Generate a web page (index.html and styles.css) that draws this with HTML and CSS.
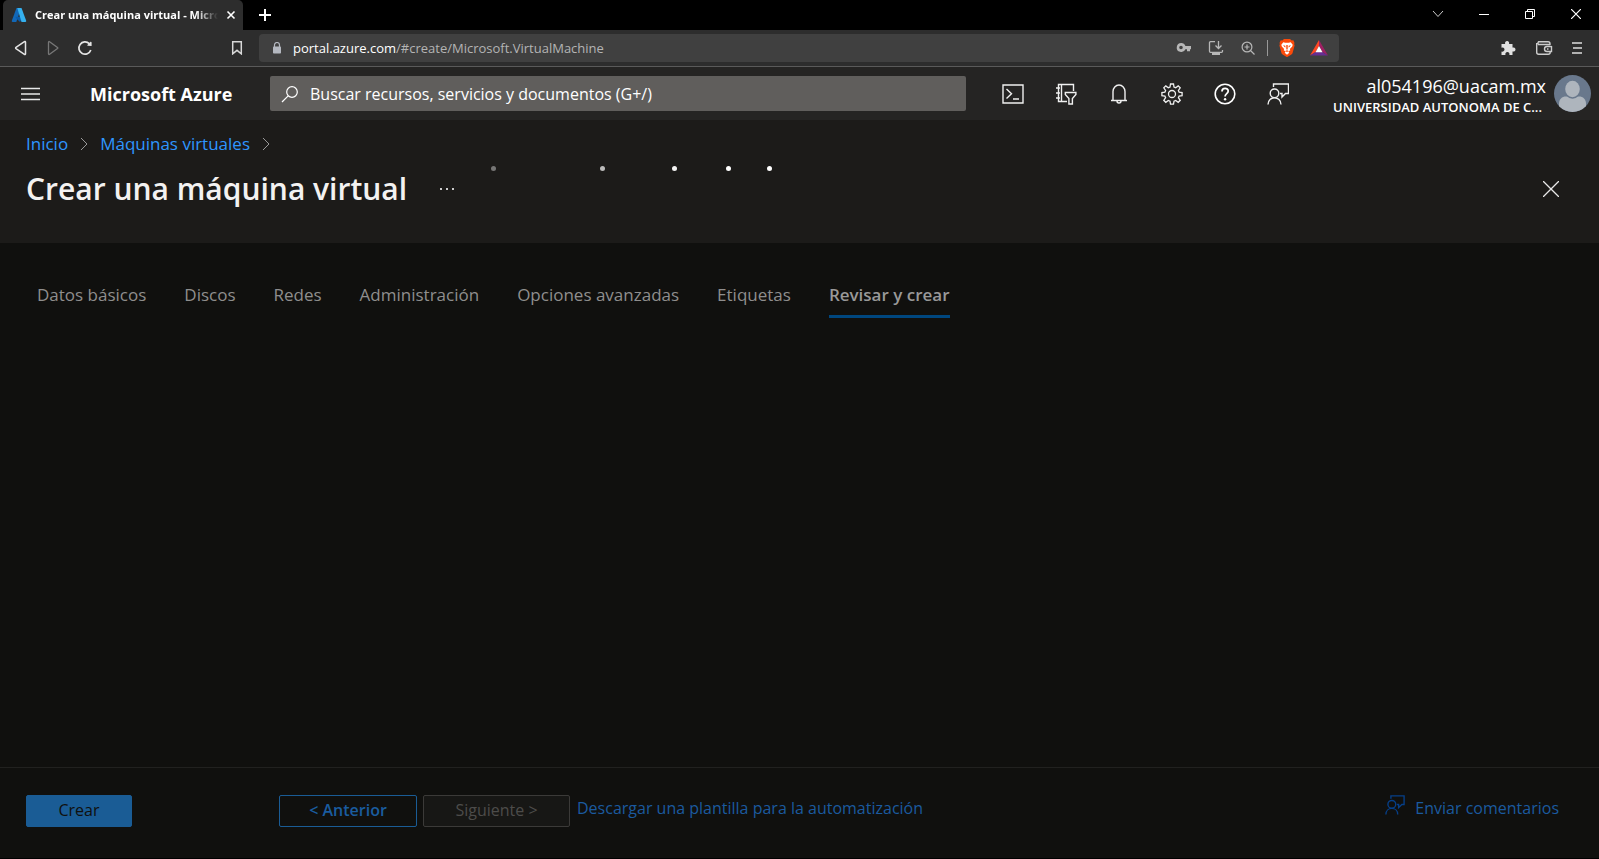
FILE: index.html
```html
<!DOCTYPE html>
<html lang="es">
<head>
<meta charset="utf-8">
<meta name="viewport" content="width=device-width, initial-scale=1">
<title>Crear una máquina virtual - Microsoft Azure</title>
<link rel="stylesheet" href="styles.css">
</head>
<body>
<div class="tabstrip">
  <div class="browser-tab">
    <svg class="favicon" width="16" height="16" viewBox="0 0 16 16"><path d="M5.5 1h4.6L5.300 15H1.600a.9.9 0 0 1-.8-1.200z" fill="#1268b8"/><path d="M4.500 9.800h7.300L9 15 4.800 11z" fill="#0a5cab"/><path d="M6.300 1h4.200l4.700 12.800a.9.900 0 0 1-.8 1.200H10.500z" fill="#35b0ee"/></svg>
    <span class="tab-title">Crear una máquina virtual - Micro</span>
    <button class="plain tab-close" aria-label="Cerrar pestaña"><svg width="10" height="10" viewBox="0 0 10 10"><path d="M1.500 1.500l7 7M8.500 1.500l-7 7" stroke="#fff" stroke-width="1.600"/></svg></button>
  </div>
  <button class="plain new-tab" aria-label="Nueva pestaña"><svg width="12" height="12" viewBox="0 0 12 12"><path d="M6 0v12M0 6h12" stroke="#fff" stroke-width="2"/></svg></button>
  <div class="window-controls">
    <button class="plain" aria-label="Buscar pestañas"><svg width="12" height="12" viewBox="0 0 12 12"><path d="M1 3l5 5.500L11 3" fill="none" stroke="#ccc"/></svg></button>
    <button class="plain" aria-label="Minimizar"><svg width="10" height="10" viewBox="0 0 10 10"><path d="M0 5.500h10" stroke="#fff"/></svg></button>
    <button class="plain" aria-label="Restaurar"><svg width="10" height="10" viewBox="0 0 10 10"><path d="M.5 2.500h7v7h-7zM2.500 2.500v-2h7v7h-2" fill="none" stroke="#fff"/></svg></button>
    <button class="plain" aria-label="Cerrar"><svg width="10" height="10" viewBox="0 0 10 10"><path d="M0 0l10 10M10 0L0 10" stroke="#fff" stroke-width="1.200"/></svg></button>
  </div>
</div>

<div class="toolbar">
  <button class="plain tool" aria-label="Atrás"><svg width="16" height="16" viewBox="0 0 16 16"><path d="M12.500 2.200v11.600c0 .8-.6.900-1.100.5L3 8.600c-.5-.4-.5-.8 0-1.200l8.400-5.700c.5-.4 1.100-.3 1.100.5z" fill="none" stroke="#e4e4e4" stroke-width="1.500"/></svg></button>
  <button class="plain tool" aria-label="Adelante"><svg width="16" height="16" viewBox="0 0 16 16"><path d="M3.500 2.200v11.600c0 .8.600.900 1.100.5L12.500 8.600c.5-.4.5-.8 0-1.200L4.600 1.700c-.5-.4-1.100-.3-1.100.5z" fill="none" stroke="#777" stroke-width="1.300"/></svg></button>
  <button class="plain tool" aria-label="Recargar"><svg width="16" height="16" viewBox="0 0 16 16"><path d="M13.800 10A6.100 6.100 0 1 1 12.300 3.700" fill="none" stroke="#e4e4e4" stroke-width="1.700"/><path d="M10.800 5.800L14.600 6V2.400c-.2-.8-1-.7-1.500-.2l-2.500 2.500c-.4.500-.3 1 .2 1.100z" fill="#e4e4e4"/></svg></button>
  <button class="plain bookmark" aria-label="Agregar marcador"><svg width="12" height="14" viewBox="0 0 12 14"><path d="M1.700.8h8.600v12L6 9.300 1.700 12.800z" fill="none" stroke="#d8d8d8" stroke-width="1.500"/></svg></button>
  <div class="urlbar">
    <svg class="lock" width="10" height="12" viewBox="0 0 10 12"><path d="M2.500 5V3a2.500 2.500 0 0 1 5 0v2" fill="none" stroke="#b4b8c0" stroke-width="1.200"/><rect x="1" y="4.500" width="8" height="7" rx=".8" fill="#b4b8c0"/></svg>
    <div class="url" role="textbox" aria-label="Dirección"><span class="host">portal.azure.com</span>/#create/Microsoft.VirtualMachine</div>
    <button class="plain url-action" aria-label="Contraseñas"><svg width="16" height="16" viewBox="0 0 16 16"><path fill-rule="evenodd" d="M5.300 3a4.500 4.500 0 0 1 4.100 3H15v3.200h-1v2h-3v-2H9.400A4.500 4.500 0 1 1 5.300 3zM5 5.700a1.800 1.800 0 1 0 0 3.600 1.800 1.800 0 0 0 0-3.600z" fill="#b7b7b7"/></svg></button>
    <button class="plain url-action" aria-label="Instalar aplicación"><svg width="16" height="16" viewBox="0 0 16 16"><path d="M7 1.700H2.500a1 1 0 0 0-1 1v8.600a1 1 0 0 0 1 1h11a1 1 0 0 0 1-1V10M10.500 1v7M7.500 5.500l3 3 3-3" fill="none" stroke="#b7b7b7" stroke-width="1.300"/><path d="M4 12.500h8V15H4z" fill="#b7b7b7"/></svg></button>
    <button class="plain url-action" aria-label="Zoom"><svg width="16" height="16" viewBox="0 0 16 16"><circle cx="7" cy="7" r="4.900" fill="none" stroke="#b7b7b7" stroke-width="1.200"/><path d="M10.500 10.500l4 4M4.500 7h5M7 4.500v5" stroke="#b7b7b7" stroke-width="1.200"/></svg></button>
    <span class="url-divider"></span>
    <button class="plain url-action shield" aria-label="Brave Shields"><svg width="16" height="18" viewBox="0 0 16 18"><path d="M5 0h6l1.700 1.400 1.600-.1L15.500 4l-.4 1 .5 1.400-2.200 8-1 1.200L8 18.200l-4.400-2.600-1-1.200-2.200-8L.9 5 .5 4l1.200-2.700 1.600.1z" fill="#fb4a0a"/><path d="M4.300 3.200l2 .5h3.400l2-.5 2 2.600-.5 1.700-2.300 2.400.4 1.400-2 1.300 1 1.200L8 15.700l-2.300-1.900 1-1.200-2-1.300.4-1.400-2.300-2.400-.5-1.700z" fill="#fff"/><path d="M4 6.200l2.300.5.2 1.800-.9-.5zM12 6.200l-2.300.5-.2 1.800.9-.5zM7.300 6h1.400v4L8 11l-.7-1zM6.300 12L8 11.300l1.700.7L8 13z" fill="#fb4a0a"/></svg></button>
    <button class="plain url-action rewards" aria-label="Brave Rewards"><svg width="18" height="16" viewBox="0 0 18 16"><path d="M9 0L0 15.500 5.700 12 9 6z" fill="#ff4724"/><path d="M9 0l9 15.500L12.300 12 9 6z" fill="#9e1f63"/><path d="M0 15.500h18L12.300 12H5.700z" fill="#662d91"/><path d="M9 6l3.500 6.200h-7z" fill="#fff"/></svg></button>
  </div>
  <div class="extensions">
    <button class="plain" aria-label="Extensiones"><svg width="16" height="16" viewBox="0 0 16 16"><path d="M1.500 4h3.700a2.100 2.100 0 1 1 3.800 0h3.500v3.600a2.100 2.100 0 1 1 0 3.800V15H9.300a2.100 2.100 0 1 0-3.800 0h-4v-3.500a2.100 2.100 0 1 0 0-3.800z" fill="#e0e0e0"/></svg></button>
    <button class="plain" aria-label="Cartera"><svg width="18" height="16" viewBox="0 0 18 16"><path d="M15 5V3.600M15 4.500H3.500a2 2 0 0 1 0-2.700H13a2 2 0 0 1 2 2M1.700 3v9.200a2 2 0 0 0 2 2h9.500a2 2 0 0 0 2-2v-.7M16.500 6v5.500H12a2.500 2.500 0 0 1 0-5h4.500M12 9h1.500" fill="none" stroke="#ccc" stroke-width="1.400"/></svg></button>
    <button class="plain" aria-label="Menú"><svg width="10" height="14" viewBox="0 0 10 14"><path d="M0 2h10M1 7h9M0 12h10" stroke="#ddd" stroke-width="1.500"/></svg></button>
  </div>
</div>

<header class="portal-bar">
  <button class="plain hamburger" aria-label="Mostrar el menú del portal"><svg width="19" height="14" viewBox="0 0 19 14"><path d="M0 1.500h19M0 7h19M0 12.500h19" stroke="#e8e8e8" stroke-width="1.300"/></svg></button>
  <a class="brand" href="#">Microsoft Azure</a>
  <label class="search">
    <svg width="18" height="18" viewBox="0 0 18 18"><circle cx="11" cy="7" r="5.300" fill="none" stroke="#fff" stroke-width="1.200"/><path d="M7.200 10.800L1 17" stroke="#fff" stroke-width="1.200"/></svg>
    <input type="text" placeholder="Buscar recursos, servicios y documentos (G+/)" aria-label="Buscar recursos, servicios y documentos">
  </label>
  <nav class="portal-icons">
    <button class="plain" aria-label="Cloud Shell"><svg width="22" height="22" viewBox="0 0 22 22"><path d="M1 2h20v18H1zM4.500 6l5 4.800-5 4.700M11 16h6" fill="none" stroke="#f0f0f0" stroke-width="1.400"/></svg></button>
    <button class="plain" aria-label="Directorios y suscripciones"><svg width="22" height="22" viewBox="0 0 22 22"><path d="M18.500 8V1.500h-15v17H12M6.500 1.500v17M1 5h4M1 10h4M1 15h4M10.300 9.500h10.600v2l-3.500 4v5.500h-3.500v-5.500l-3.600-4z" fill="none" stroke="#f0f0f0" stroke-width="1.400"/></svg></button>
    <button class="plain" aria-label="Notificaciones"><svg width="22" height="22" viewBox="0 0 22 22"><path d="M5 17.500V8.500a6 6.500 0 0 1 12 0v9M3 17.500h16M9 18a2 2 0 0 0 4 0" fill="none" stroke="#f0f0f0" stroke-width="1.400"/></svg></button>
    <button class="plain" aria-label="Configuración"><svg width="22" height="22" viewBox="0 0 22 22"><path d="M9.500 1h3l.5 3 1.700.7 2.500-1.800 2 2-1.800 2.600.7 1.600 3 .5v3l-3 .5-.7 1.600 1.800 2.600-2 2-2.500-1.800-1.700.7-.5 3h-3L9 18.200l-1.700-.7-2.500 1.800-2-2 1.800-2.600-.7-1.600-3-.5v-3l3-.5.7-1.600-1.800-2.600 2-2 2.500 1.800L9 4z" fill="none" stroke="#f0f0f0" stroke-width="1.300"/><circle cx="11" cy="11" r="3.500" fill="none" stroke="#f0f0f0" stroke-width="1.300"/></svg></button>
    <button class="plain" aria-label="Ayuda"><svg width="22" height="22" viewBox="0 0 22 22"><circle cx="11" cy="11" r="9.800" fill="none" stroke="#fff" stroke-width="1.600"/><path d="M8 8.500c0-4.200 6.200-4 6.200-.4 0 2.600-3.100 2.500-3.100 5.300" fill="none" stroke="#fff" stroke-width="1.800"/><circle cx="11.100" cy="16.200" r="1.200" fill="#fff"/></svg></button>
    <button class="plain" aria-label="Comentarios"><svg width="22" height="22" viewBox="0 0 22 22"><path d="M6.500 4V1H21.500v9.500H18.500l-3.500 3.500v-3.500h-2M1 21.500c0-9 13-9 13 0" fill="none" stroke="#f0f0f0" stroke-width="1.400"/><circle cx="7.500" cy="10.300" r="4.300" fill="none" stroke="#f0f0f0" stroke-width="1.400"/></svg></button>
  </nav>
  <button class="plain account">
    <span class="account-text"><span class="email">al054196@uacam.mx</span><span class="directory">UNIVERSIDAD AUTONOMA DE C...</span></span>
    <svg width="37" height="37" viewBox="0 0 37 37"><defs><clipPath id="avatar"><circle cx="18.500" cy="18.500" r="18.500"/></clipPath></defs><g clip-path="url(#avatar)"><path d="M0 0h37v37H0z" fill="#69788c"/><path d="M5 37V29c0-5 3-7.500 7-7.500h13c4 0 7 2.500 7 7.500v8z" fill="#aeb5bd"/><ellipse cx="18.500" cy="14.500" rx="8.300" ry="9.300" fill="#69788c"/><ellipse cx="18.500" cy="14" rx="7.300" ry="8.200" fill="#aeb5bd"/></g></svg>
  </button>
</header>

<section class="blade-head">
  <nav class="breadcrumb" aria-label="Ruta">
    <a href="#">Inicio</a>
    <svg width="8" height="14" viewBox="0 0 8 14"><path d="M1 1l6 6-6 6" fill="none" stroke="#999"/></svg>
    <a href="#">Máquinas virtuales</a>
    <svg width="8" height="14" viewBox="0 0 8 14"><path d="M1 1l6 6-6 6" fill="none" stroke="#999"/></svg>
  </nav>
  <div class="title-row">
    <h1>Crear una máquina virtual</h1>
    <button class="plain" aria-label="Más"><svg width="16" height="4" viewBox="0 0 16 4"><path d="M1 1h2v2H1zM7 1h2v2H7zM13 1h2v2h-2z" fill="#ccc"/></svg></button>
    <button class="plain blade-close" aria-label="Cerrar hoja"><svg width="16" height="16" viewBox="0 0 16 16"><path d="M0 0l16 16M16 0L0 16" stroke="#e8e8e8" stroke-width="1.300"/></svg></button>
  </div>
  <div class="progress" role="progressbar" aria-label="Cargando"><i class="dot dot-1"></i><i class="dot dot-2"></i><i class="dot dot-3"></i><i class="dot dot-4"></i><i class="dot dot-5"></i></div>
</section>

<main class="blade-body">
  <div class="steps" role="tablist">
    <button class="plain step" role="tab">Datos básicos</button>
    <button class="plain step" role="tab">Discos</button>
    <button class="plain step" role="tab">Redes</button>
    <button class="plain step" role="tab">Administración</button>
    <button class="plain step" role="tab">Opciones avanzadas</button>
    <button class="plain step" role="tab">Etiquetas</button>
    <button class="plain step active" role="tab" aria-selected="true">Revisar y crear</button>
  </div>
</main>

<footer class="actions">
  <button class="btn create">Crear</button>
  <button class="btn previous">&lt; Anterior</button>
  <button class="btn next" disabled>Siguiente &gt;</button>
  <a class="template" href="#">Descargar una plantilla para la automatización</a>
  <a class="feedback" href="#"><svg width="20" height="20" viewBox="0 0 22 22"><path d="M6.500 4V1H21v9.500h-2.500l-3.500 3.500v-3.500h-2M1 21.500c0-9 13-9 13 0" fill="none" stroke="#063f88" stroke-width="1.500"/><circle cx="7.500" cy="10.300" r="4.300" fill="none" stroke="#063f88" stroke-width="1.500"/></svg><span>Enviar comentarios</span></a>
</footer>
</body>
</html>
```
FILE: styles.css
```css
* {
  box-sizing: border-box;
}

body {
  margin: 0;
  min-height: 100vh;
  display: flex;
  flex-direction: column;
  background: #10100e;
  color: #fff;
  font-family: "Segoe UI", "Open Sans", "Noto Sans", sans-serif;
  font-size: 16px;
  line-height: 24px;
}

a {
  text-decoration: none;
}

svg {
  display: block;
  flex: none;
}

.plain {
  display: flex;
  align-items: center;
  justify-content: center;
  padding: 0;
  border: 0;
  background: none;
  color: inherit;
  font: inherit;
}

/* Browser tab strip */
.tabstrip {
  display: flex;
  height: 30px;
  padding-left: 3px;
  background: #000;
}

.browser-tab {
  display: flex;
  align-items: center;
  width: 240px;
  padding: 0 7px 0 8px;
  border-radius: 5px 5px 0 0;
  background: #2d2d2d;
}

.tab-title {
  flex: 1;
  min-width: 0;
  margin-left: 8px;
  white-space: nowrap;
  font-size: 11px;
  font-weight: 700;
  mask-image: linear-gradient(to right, #000 88%, transparent);
}

.tab-close {
  width: 10px;
  margin-left: 8px;
}

.new-tab {
  width: 44px;
}

.window-controls {
  display: flex;
  margin-left: auto;
}

.window-controls button {
  width: 46px;
  padding-bottom: 2px;
}

/* Browser toolbar */
.toolbar {
  display: flex;
  align-items: center;
  height: 37px;
  padding: 0 17px 0 5px;
  border-bottom: 1px solid #5a5a5a;
  background: #2d2d2d;
}

.tool {
  width: 32px;
  height: 32px;
}

.bookmark {
  width: 44px;
  height: 32px;
  margin-left: 114px;
}

.urlbar {
  flex: 1;
  display: flex;
  align-items: center;
  height: 28px;
  margin-right: 161px;
  padding: 0 4px 0 13px;
  border-radius: 4px;
  background: #404040;
}

.url {
  flex: 1;
  margin-left: 11px;
  color: #b4b4b4;
  font-size: 13px;
}

.host {
  color: #fff;
}

.url-action {
  width: 32px;
}

.url-divider {
  width: 1px;
  height: 16px;
  margin: 0 3px;
  background: #999;
}

.extensions {
  display: flex;
  justify-content: flex-end;
  gap: 19px;
}

/* Portal top bar */
.portal-bar {
  display: flex;
  align-items: center;
  height: 53px;
  padding: 0 8px 0 21px;
  background: #252423;
}

.brand {
  width: 180px;
  margin-left: 50px;
  color: #fff;
  font-size: 18px;
  font-weight: 700;
}

.search {
  flex: 1;
  display: flex;
  align-items: center;
  gap: 11px;
  height: 35px;
  padding: 0 11px;
  border-radius: 2px;
  background: #605e5c;
}

.search input {
  flex: 1;
  min-width: 0;
  padding: 0;
  border: 0;
  outline: 0;
  background: none;
  color: #fff;
  font: inherit;
}

.search input::placeholder {
  color: #fff;
  opacity: 1;
}

.portal-icons {
  display: flex;
  margin-left: 20px;
}

.portal-icons button {
  width: 53px;
  height: 53px;
}

.account {
  width: 287px;
  justify-content: flex-end;
  gap: 8px;
}

.account-text {
  display: flex;
  flex-direction: column;
  padding-top: 4px;
  text-align: right;
  white-space: nowrap;
}

.email {
  font-size: 18px;
  line-height: 22px;
}

.directory {
  padding-right: 4px;
  font-size: 13px;
  font-weight: 600;
  line-height: 20px;
}

/* Blade header */
.blade-head {
  position: relative;
  padding: 12px 40px 34px 26px;
  background: #1c1b19;
}

.breadcrumb {
  display: flex;
  align-items: center;
  gap: 12px;
  color: #2e96ff;
  font-size: 17px;
}

.breadcrumb a {
  color: inherit;
}

.title-row {
  display: flex;
  align-items: center;
  gap: 32px;
  margin-top: 12px;
}

h1 {
  margin: 0;
  color: #f3f2f1;
  font-size: 30px;
  font-weight: 600;
  line-height: 41px;
}

.blade-close {
  margin-left: auto;
}

.progress {
  position: absolute;
  top: 46px;
  left: 0;
  width: 100%;
}

.dot {
  position: absolute;
  width: 5px;
  height: 5px;
  border-radius: 50%;
  background: #fff;
}

.dot-1 { left: 491px; opacity: .4; }
.dot-2 { left: 600px; opacity: .7; }
.dot-3 { left: 672px; opacity: .95; }
.dot-4 { left: 726px; }
.dot-5 { left: 767px; }

/* Wizard steps */
.blade-body {
  flex: 1;
  padding: 38px 37px;
}

.steps {
  display: flex;
  gap: 38px;
}

.step {
  height: 37px;
  padding-bottom: 7px;
  border-bottom: 3px solid transparent;
  color: #8f8e8d;
  font-size: 17px;
  white-space: nowrap;
}

.step.active {
  border-color: #00477f;
  color: #999;
  font-weight: 600;
}

/* Footer actions */
.actions {
  display: flex;
  align-items: flex-start;
  height: 92px;
  padding: 27px 40px 0 26px;
  border-top: 1px solid #21211f;
  border-bottom: 1px solid #000;
}

.btn {
  height: 32px;
  padding: 0 0 2px;
  border: 1px solid #1a5c95;
  border-radius: 2px;
  background: none;
  font: inherit;
}

.create {
  width: 106px;
  background: #1a5c95;
  color: #10100e;
}

.previous {
  width: 138px;
  margin-left: 147px;
  color: #1a5c9f;
  font-weight: 600;
}

.next {
  width: 147px;
  margin: 0 7px 0 6px;
  border-color: #3b3a38;
  background: #171715;
  color: #4d4c4a;
}

.template,
.feedback {
  color: #1b5a9f;
  line-height: 26px;
}

.feedback {
  display: flex;
  gap: 10px;
  margin-left: auto;
}
```
